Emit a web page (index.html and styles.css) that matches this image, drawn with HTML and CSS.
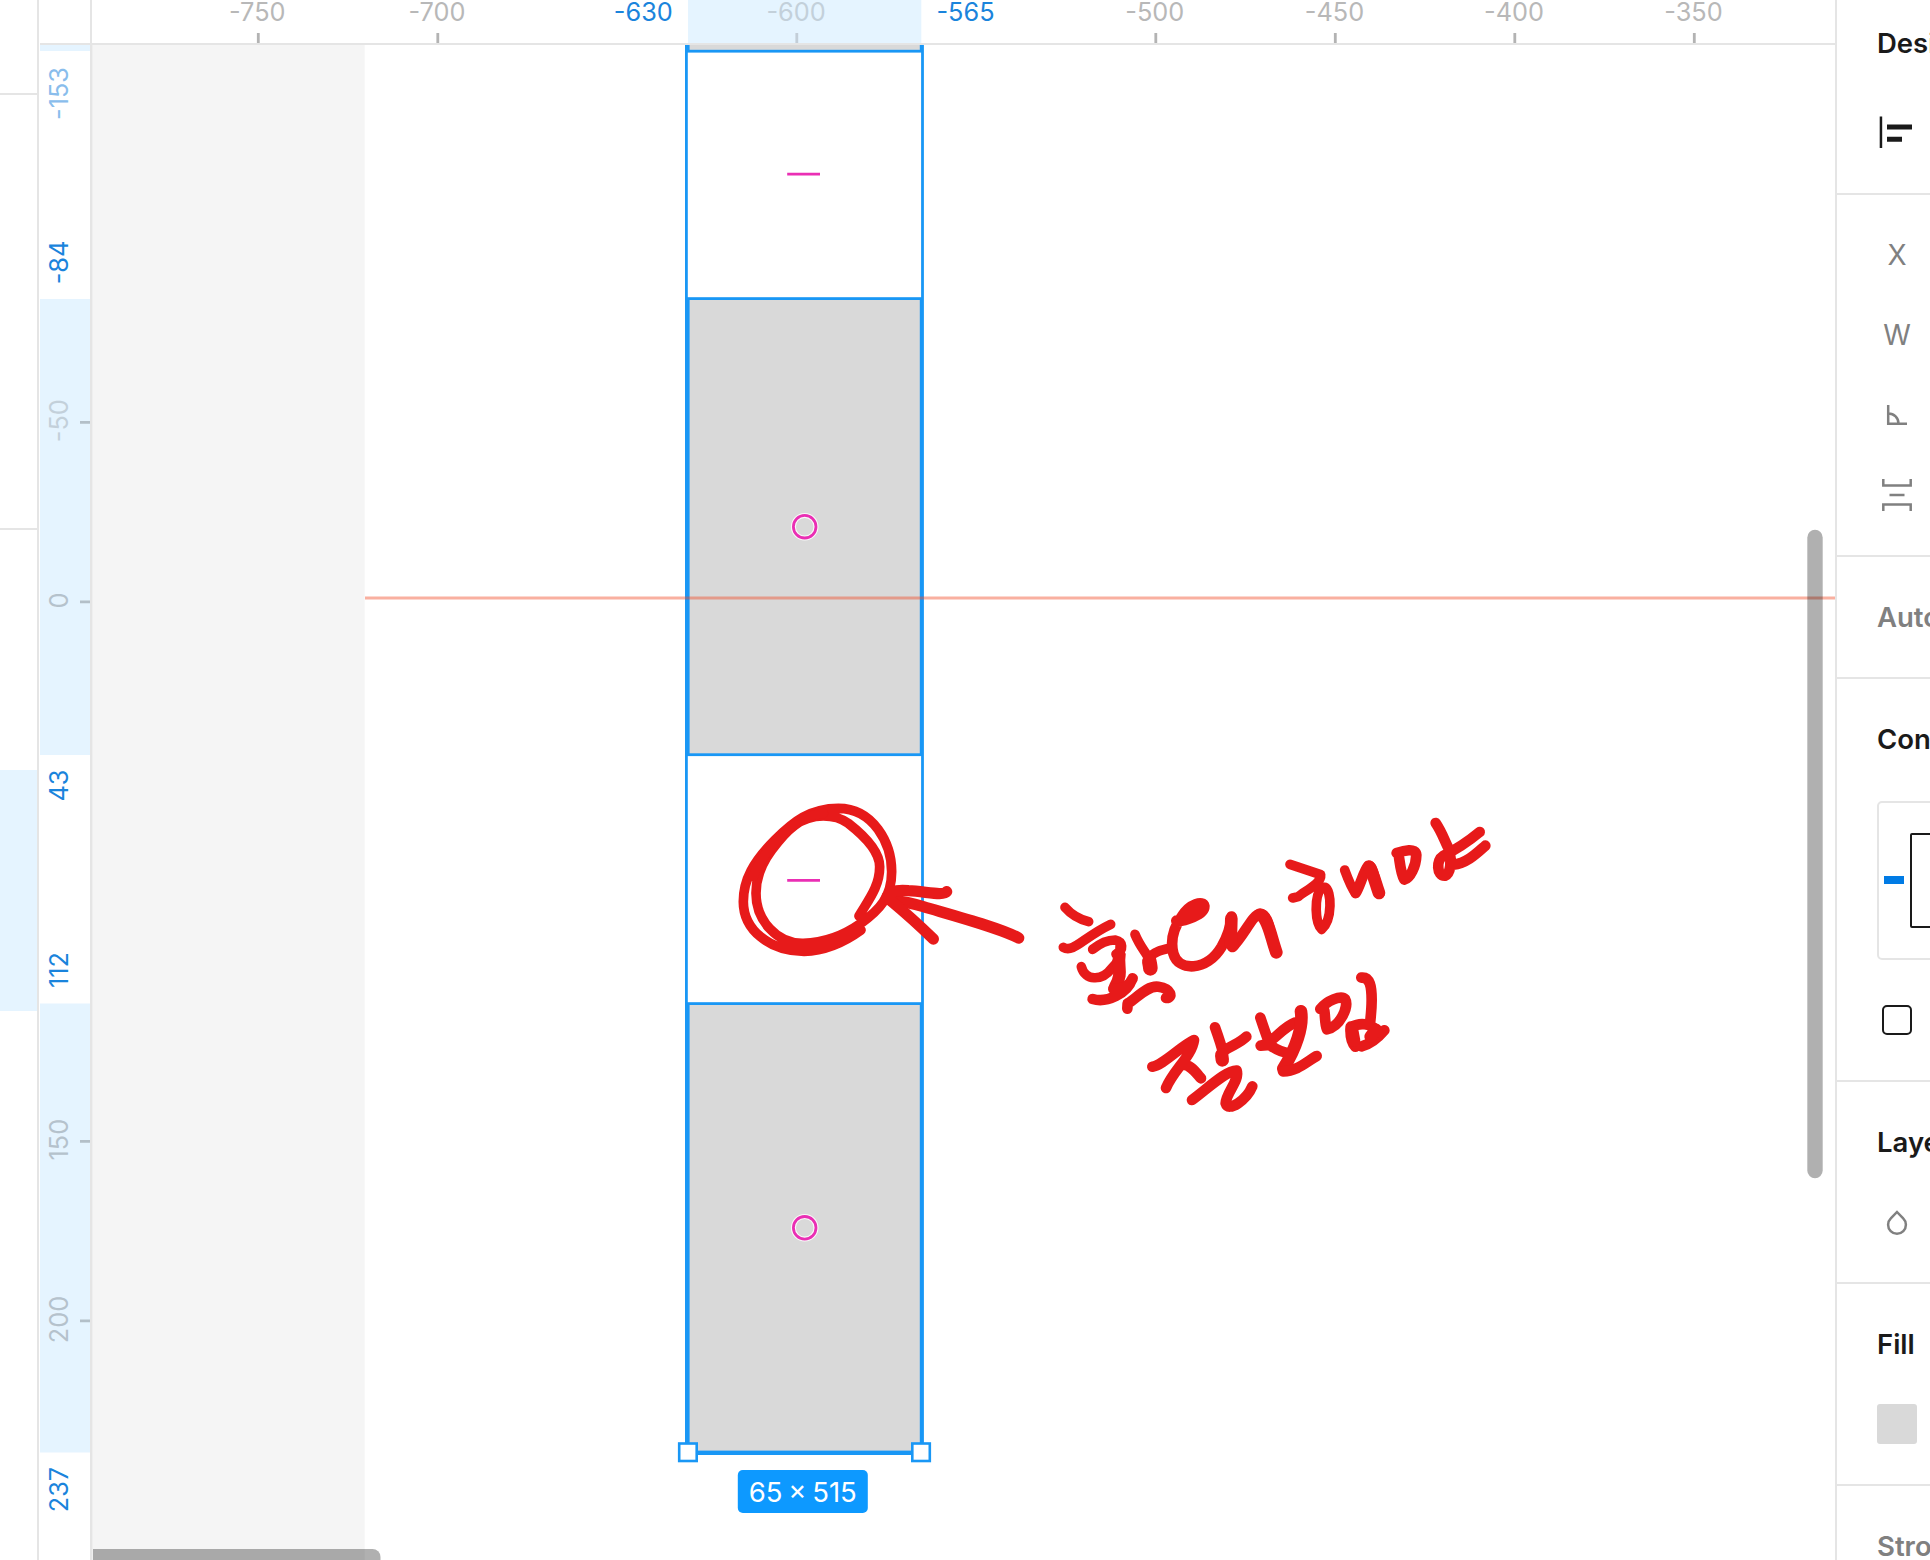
FILE: index.html
```html
<!DOCTYPE html>
<html lang="ko">
<head>
<meta charset="utf-8">
<title>Design editor</title>
<link rel="stylesheet" href="styles.css">
</head>
<body>
<div class="app">
  <aside class="layers">
    <div class="layers-head"></div>
    <div class="layers-pages"></div>
    <div class="layers-list"><div class="layer-selected"></div></div>
  </aside>

  <main class="workspace">
    <div class="corner"></div>
    <svg class="ruler ruler-x" viewBox="93 0 1742 45">
      <rect class="band" x="688" y="0" width="233.3" height="43"/>
      <rect class="edge" x="93" y="43" width="1742" height="2.4"/>
      <g class="tick">
        <path d="M258.3 33v10M437.8 33v10M1155.8 33v10M1335.3 33v10M1514.8 33v10M1694.3 33v10"/>
        <path class="tick-dim" d="M796.8 33v10"/>
      </g>
      <g class="label">
        <text x="257.3" y="20.7">-750</text>
        <text x="437" y="20.7">-700</text>
        <text class="dim" x="796" y="20.7">-600</text>
        <text x="1154.8" y="20.7">-500</text>
        <text x="1334.5" y="20.7">-450</text>
        <text x="1514" y="20.7">-400</text>
        <text x="1693.5" y="20.7">-350</text>
        <text class="active" x="643.3" y="20.7">-630</text>
        <text class="active" x="965.5" y="20.7">-565</text>
      </g>
    </svg>
    <svg class="ruler ruler-y" viewBox="39 45 54 1515">
      <rect class="band" x="40" y="45" width="50" height="6"/>
      <rect class="band" x="40" y="299" width="50" height="456"/>
      <rect class="band" x="40" y="1003.5" width="50" height="449"/>
      <rect class="edge" x="90" y="45" width="2.6" height="1515"/>
      <path class="tick tick-mid" d="M80 422.3h10M80 601.8h10M80 1141.3h10M80 1320.8h10"/>
      <g class="label">
        <text class="faded" transform="translate(67.7 93.5) rotate(-90)">-153</text>
        <text class="active" transform="translate(67.7 262.5) rotate(-90)">-84</text>
        <text class="dim" transform="translate(67.7 420.7) rotate(-90)">-50</text>
        <text class="mid" transform="translate(67.7 600.5) rotate(-90)">0</text>
        <text class="active" transform="translate(67.7 785.5) rotate(-90)">43</text>
        <text class="active" transform="translate(67.7 970) rotate(-90)">112</text>
        <text class="mid" transform="translate(67.7 1139.7) rotate(-90)">150</text>
        <text class="mid" transform="translate(67.7 1319.5) rotate(-90)">200</text>
        <text class="active" transform="translate(67.7 1489.5) rotate(-90)">237</text>
      </g>
    </svg>
    <svg class="canvas" viewBox="93 45 1742 1515">
      <rect class="outside" x="93" y="45" width="271.7" height="1515"/>
      <g class="shape">
        <rect x="688.2" y="20" width="233" height="31.2"/>
        <rect x="688.2" y="298.6" width="233" height="456.1"/>
        <rect x="688.2" y="1003.6" width="233" height="448.4"/>
      </g>
      <rect class="selection" x="686.4" y="20" width="236.1" height="1433.6"/>
      <path class="guide" d="M365 598H1835"/>
      <path class="gap" d="M787.2 174.2h32.8M787.2 880.3h32.8"/>
      <g class="halo"><circle cx="804.7" cy="526.7" r="11.3"/><circle cx="804.7" cy="1227.8" r="11.3"/></g>
      <g class="ring"><circle cx="804.7" cy="526.7" r="11.3"/><circle cx="804.7" cy="1227.8" r="11.3"/></g>
      <g class="handle">
        <rect x="679.2" y="1443.5" width="17.5" height="17.5"/>
        <rect x="912.3" y="1443.5" width="17.5" height="17.5"/>
      </g>
      <rect class="pill" x="737.8" y="1470" width="130" height="43" rx="5"/>
      <text class="pill-text" x="802.8" y="1501.6">65 × 515</text>

      <g class="ink" transform="translate(660 720) scale(.33333)">
        <path d="M597 588C625 540 659 500 659 440C659 395 610 345 565 310C540 292 515 288 490 288C420 288 380 330 335 390C305 430 288 470 288 520C288 600 350 672 430 670C500 668 560 640 600 612C660 570 695 530 695 455C695 370 640 265 535 265C450 265 400 305 345 360C280 425 250 480 250 545C250 630 330 694 432 694C500 692 555 665 603 630"/>
        <path d="M490 280C430 285 380 325 335 378C310 408 290 440 280 470"/>
        <path class="w32" d="M1076 654C1020 624 900 592 790 560C750 548 715 543 690 540"/>
        <path class="w32" d="M860 515C850 528 800 515 745 512C715 509 690 515 682 528M690 540C720 565 770 608 820 657"/>
      </g>
      <g class="ink writing" transform="translate(1040 800) scale(.33333)">
        <path class="w28" d="M75 322C95 345 115 357 146 365M70 442C100 460 130 412 212 373"/>
        <path class="w28" d="M158 448C180 430 205 420 225 420C250 425 252 450 228 462M124 500C135 542 185 545 215 505C235 485 243 470 240 440"/>
        <path class="w36" d="M238 465C232 500 250 520 225 562"/>
        <path d="M278 535C265 565 240 565 220 567M158 597C200 610 262 580 276 538"/>
        <path class="w28" d="M285 403C300 440 320 460 326 475M326 475C340 455 365 450 390 445"/>
        <path d="M262 626L263 610C285 600 320 555 355 560C395 565 400 595 378 594"/>
        <path class="w46" d="M328 485C330 495 331 500 331 505"/>
        <path d="M409 362C430 365 495 345 493 318C490 302 450 310 425 350C400 385 390 420 400 460C415 515 500 515 545 440C562 410 572 380 575 350C568 380 570 410 577 441C610 410 640 340 660 342C690 340 690 420 709 458"/>
        <path class="w36" d="M574 356L572 430L578 436M660 344C685 355 692 410 709 457"/>
        <path class="w28" d="M750 193L842 224C845 252 790 275 775 290L758 294M846 262C820 290 826 370 845 388C878 360 875 270 855 262Z"/>
        <path class="w28" d="M914 210C925 240 935 265 947 280"/>
        <path d="M947 279C960 260 970 215 985 197C1000 195 1005 250 1018 281"/>
        <path class="w36" d="M988 201C1000 220 1008 255 1017 279"/>
        <path d="M1070 159C1090 152 1128 142 1129 165C1128 200 1110 235 1093 239C1082 220 1080 190 1076 165"/>
        <path d="M1187 69C1205 95 1215 125 1228 150C1235 180 1233 220 1215 227C1189 228 1189 180 1209 168C1245 150 1290 120 1319 96M1240 194C1280 190 1310 160 1336 137"/>
        <path d="M337 800C370 795 420 740 462 720C455 770 400 810 378 864M425 794C450 790 470 820 483 835M525 682C535 710 545 740 548 755C575 735 600 730 619 710M456 900C500 868 560 810 590 812C600 840 557 880 557 910C565 938 620 900 637 859"/>
        <path class="w40" d="M545 765L547 780"/>
        <path d="M661 653C670 680 680 710 690 735L662 737C690 735 730 680 765 668M690 735C715 755 740 760 755 762"/>
        <path class="w36" d="M783 634C790 680 768 745 730 806"/>
        <path d="M729 814C770 815 800 785 830 768"/>
        <path d="M841 627C860 602 903 585 915 597C928 620 900 680 861 688C854 670 856 650 853 632"/>
        <path d="M964 533C990 530 995 560 995 600C995 630 992 650 990 672M932 680C930 708 936 730 946 740M935 681C960 667 990 670 1012 692M965 739C1000 730 1022 704 1033 691"/>
        <path class="w36" d="M1008 690L992 710M936 690L942 722"/>
      </g>

      <rect class="scroll" x="1807.3" y="529.8" width="15.4" height="648.5" rx="7.7"/>
      <path class="scroll" d="M93 1549H372.5A8 8 0 0 1 380.5 1557V1560H93Z"/>
    </svg>
  </main>

  <aside class="inspector">
    <section class="section section-align">
      <h2 class="title tab">Design</h2>
      <div class="row row-align">
        <svg class="icon" viewBox="0 0 30 34"><path fill="#1a1a1a" d="M-.3 .6h2.5v31.5h-2.5zM7 8.4h25v5H7zM7 20.7h15v5H7z"/></svg>
      </div>
    </section>
    <section class="section section-frame">
      <div class="row field">X</div>
      <div class="row field">W</div>
      <div class="row field"><svg class="glyph" viewBox="0 0 30 30"><path d="M6.2 5v18.8H25M6.2 13.5a10 10 0 0 1 10.3 10.3"/></svg></div>
      <div class="row field"><svg class="glyph" viewBox="0 0 30 32"><path d="M1.3 0v6.5h27.4V0M1.3 32v-6.5h27.4V32M7.5 16h15"/></svg></div>
    </section>
    <section class="section">
      <h2 class="title muted">Auto layout</h2>
    </section>
    <section class="section">
      <h2 class="title">Constraints</h2>
      <div class="constraints"><span class="pin"></span><span class="frame"></span></div>
      <div class="row row-check"><span class="checkbox"></span></div>
    </section>
    <section class="section section-layer">
      <h2 class="title">Layer</h2>
      <div class="row row-blend"><svg class="glyph drop" viewBox="0 0 30 30"><path d="M15 4L21.2 10.4A8.9 8.9 0 1 1 8.8 10.4Z"/></svg></div>
    </section>
    <section class="section section-fill">
      <h2 class="title">Fill</h2>
      <span class="swatch"></span>
    </section>
    <section class="section">
      <h2 class="title muted">Stroke</h2>
    </section>
  </aside>
</div>
</body>
</html>
```
FILE: styles.css
```css
* { box-sizing: border-box; }
body { margin: 0; background: #fff; font-family: Inter, "Noto Sans CJK KR", sans-serif; overflow: hidden; }
svg { display: block; }

.app { display: flex; width: 1930px; height: 1560px; overflow: hidden; }

.layers { width: 39px; flex: none; border-right: 2px solid #e5e5e5; }
.layers-head { height: 95px; border-bottom: 2px solid #e5e5e5; }
.layers-pages { height: 435px; border-bottom: 2px solid #e5e5e5; }
.layers-list { padding-top: 240px; }
.layer-selected { height: 241px; background: #e5f4ff; }

.workspace { width: 1796px; flex: none; display: grid; grid-template: 45px 1515px / 54px 1742px; }
.corner {
  background:
    linear-gradient(#e5e5e5, #e5e5e5) 1px 43px / 53px 2px no-repeat,
    linear-gradient(#e5e5e5, #e5e5e5) 51px 0 / 2px 45px no-repeat;
}
.ruler, .canvas { width: 100%; height: 100%; }
.band { fill: #e5f4ff; }
.edge { fill: #e5e5e5; }
.tick { stroke: #b3b3b3; stroke-width: 2.8; fill: none; }
.tick-dim { stroke: #c3ced8; }
.tick-mid { stroke: #b3bfc8; }
.label { font-size: 25.3px; fill: #b8b8b8; text-anchor: middle; }
.dim { fill: #c3d0da; }
.mid { fill: #b5c2cc; }
.active { fill: #1a84dc; }
.faded { fill: #89bdec; }

.outside { fill: #f5f5f5; }
.shape { fill: #d9d9d9; stroke: #1997f5; stroke-width: 2.8; }
.selection { fill: none; stroke: #1997f5; stroke-width: 2.8; }
.guide { stroke: #f24822; stroke-opacity: .43; stroke-width: 3; }
.gap { stroke: #ea2fb4; stroke-width: 2.8; }
.halo { fill: none; stroke: #fff; stroke-opacity: .85; stroke-width: 5; }
.ring { fill: none; stroke: #ea2fb4; stroke-width: 2.8; }
.handle { fill: #fff; stroke: #1997f5; stroke-width: 2.6; }
.pill { fill: #0d99ff; }
.pill-text { fill: #fff; font-size: 27.5px; text-anchor: middle; word-spacing: -2px; }
.ink { fill: none; stroke: #e71a1a; stroke-width: 29; stroke-linecap: round; stroke-linejoin: round; }
.writing { stroke-width: 32; }
.w28 { stroke-width: 29; }
.w32 { stroke-width: 34; }
.w36 { stroke-width: 38; }
.w40 { stroke-width: 40; }
.w46 { stroke-width: 44; }
.scroll { fill: #000; fill-opacity: .31; }

.inspector { width: 95px; flex: none; border-left: 2px solid #e5e5e5; overflow: hidden; white-space: nowrap; }
.section { border-bottom: 2px solid #e5e5e5; padding-left: 40px; }
.title { margin: 0; height: 120px; line-height: 120px; font-size: 27.5px; font-weight: 600; color: #1a1a1a; }
.tab { height: 86px; line-height: 86px; }
.muted { color: #808080; }
.row { display: flex; align-items: center; }
.section-align { height: 195px; }
.row-align { height: 94px; padding-left: 3px; }
.icon { width: 30px; height: 34px; overflow: visible; }
.section-frame { padding: 20px 0 20px 40px; }
.field { width: 40px; height: 80px; justify-content: center; font-size: 28px; color: #808080; font-weight: 400; }
.glyph { width: 30px; height: 30px; fill: none; stroke: #808080; stroke-width: 2.5; }
.glyph[viewBox="0 0 30 32"] { height: 32px; }
.constraints {
  display: flex; align-items: center; gap: 6px; width: 160px; height: 159px; margin-top: 2px;
  padding-left: 5px; border: 2px solid #e5e5e5; border-radius: 5px;
}
.pin { flex: none; width: 20px; height: 8px; margin-bottom: 1px; background: #007be5; }
.frame { flex: none; width: 95px; height: 95px; border: 2px solid #1a1a1a; border-radius: 2px; }
.row-check { height: 120px; padding-left: 5px; }
.checkbox { width: 30px; height: 30px; border: 2px solid #1a1a1a; border-radius: 5px; }
.section-layer { height: 202px; }
.row-blend { height: 42px; padding-left: 5px; }
.section-fill { height: 202px; }
.swatch { display: block; width: 40px; height: 40px; border-radius: 3px; background: #d9d9d9; }
```
